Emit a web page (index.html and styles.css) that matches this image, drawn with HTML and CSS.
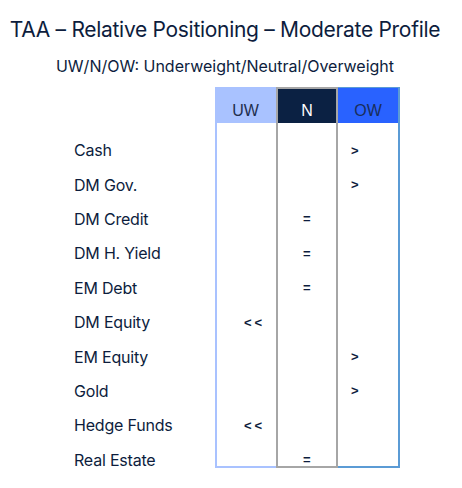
FILE: index.html
```html
<!DOCTYPE html>
<html lang="en">
<head>
    <meta charset="UTF-8">
    <title>TAA - Relative Positioning</title>
    <link rel="stylesheet" href="styles.css">
</head>
<body>
    <div class="page">
        <h1 class="title">TAA – Relative Positioning – Moderate Profile</h1>
        <p class="subtitle">UW/N/OW: Underweight/Neutral/Overweight</p>

        <div class="board">
            <div class="labels">
                <div class="head"></div>
                <div class="body">
                    <div class="row">Cash</div>
                    <div class="row">DM Gov.</div>
                    <div class="row">DM Credit</div>
                    <div class="row">DM H. Yield</div>
                    <div class="row">EM Debt</div>
                    <div class="row">DM Equity</div>
                    <div class="row">EM Equity</div>
                    <div class="row">Gold</div>
                    <div class="row">Hedge Funds</div>
                    <div class="row">Real Estate</div>
                </div>
            </div>

            <div class="col col-uw">
                <div class="head">UW</div>
                <div class="body">
                    <div class="row"></div>
                    <div class="row"></div>
                    <div class="row"></div>
                    <div class="row"></div>
                    <div class="row"></div>
                    <div class="row mark">&lt;&lt;</div>
                    <div class="row"></div>
                    <div class="row"></div>
                    <div class="row mark">&lt;&lt;</div>
                    <div class="row"></div>
                </div>
            </div>

            <div class="col col-n">
                <div class="head">N</div>
                <div class="body">
                    <div class="row"></div>
                    <div class="row"></div>
                    <div class="row mark">=</div>
                    <div class="row mark">=</div>
                    <div class="row mark">=</div>
                    <div class="row"></div>
                    <div class="row"></div>
                    <div class="row"></div>
                    <div class="row"></div>
                    <div class="row mark">=</div>
                </div>
            </div>

            <div class="col col-ow">
                <div class="head">OW</div>
                <div class="body">
                    <div class="row mark">&gt;</div>
                    <div class="row mark">&gt;</div>
                    <div class="row"></div>
                    <div class="row"></div>
                    <div class="row"></div>
                    <div class="row"></div>
                    <div class="row mark">&gt;</div>
                    <div class="row mark">&gt;</div>
                    <div class="row"></div>
                    <div class="row"></div>
                </div>
            </div>
        </div>
    </div>
</body>
</html>
```

FILE: styles.css
```css
:root {
    --ink: #0d1d3d;
    --uw: #a9c2ff;
    --n: #0b2143;
    --ow: #2962ff;
    --grey: #a6a6a6;
    --ow-line: #5b9bd5;
}

* {
    margin: 0;
    padding: 0;
    box-sizing: border-box;
}

body {
    font-family: Inter, "Open Sans", sans-serif;
    background: white;
    color: var(--ink);
}

.page {
    width: 450px;
    padding-top: 17px;
}

.title {
    font-weight: 400;
    font-size: 21px;
    line-height: 26px;
    text-align: center;
    letter-spacing: -0.3px;
}

.subtitle {
    margin-top: 13px;
    font-size: 16px;
    line-height: 20px;
    text-align: center;
}

.board {
    display: flex;
    margin-top: 11px;
}

.labels {
    width: 215px;
    padding-left: 74px;
    font-size: 16px;
    letter-spacing: -0.2px;
}

.head {
    height: 36px;
    display: flex;
    align-items: flex-end;
    justify-content: center;
    padding-bottom: 3px;
    font-family: "Liberation Sans", Arial, sans-serif;
    font-size: 16px;
}

.body {
    padding-top: 10px;
    height: 345px;
}

.row {
    height: 34.4px;
    display: flex;
    align-items: center;
}

.col {
    width: 62px;
}

.col .body {
    background: white;
}

.mark {
    font-family: "Liberation Sans", Arial, sans-serif;
    font-weight: 700;
    font-size: 13px;
    letter-spacing: 3px;
}

.col-uw {
    width: 61px;
}

.col-uw .head {
    background: var(--uw);
    color: #1f2f4f;
}

.col-uw .body {
    border-left: 2px solid var(--uw);
    border-bottom: 2px solid var(--uw);
    padding-left: 27px;
}

.col-n .head {
    background: var(--n);
    color: white;
    border: 2px solid var(--grey);
    border-bottom: none;
}

.col-n .body {
    border: 2px solid var(--grey);
    border-top: none;
    padding-left: 25px;
}

.col-ow .head {
    background: var(--ow);
    color: #1a2e5a;
    border-top: 1px solid var(--ow-line);
    border-right: 2px solid var(--ow-line);
}

.col-ow .body {
    border-right: 2px solid var(--ow-line);
    border-bottom: 2px solid var(--ow-line);
    padding-left: 13px;
}
```
